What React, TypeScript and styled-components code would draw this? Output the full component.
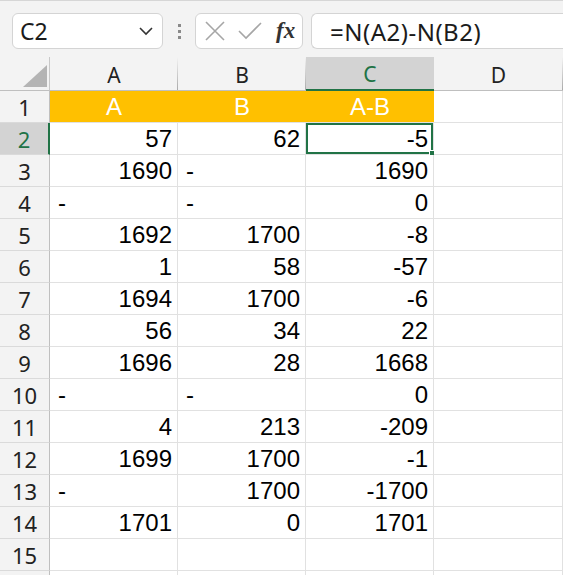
import { createGlobalStyle, styled } from 'styled-components';

const GREEN = '#217346';

const rows: string[][] = [
  ['57', '62', '-5'],
  ['1690', '-', '1690'],
  ['-', '-', '0'],
  ['1692', '1700', '-8'],
  ['1', '58', '-57'],
  ['1694', '1700', '-6'],
  ['56', '34', '22'],
  ['1696', '28', '1668'],
  ['-', '-', '0'],
  ['4', '213', '-209'],
  ['1699', '1700', '-1'],
  ['-', '1700', '-1700'],
  ['1701', '0', '1701'],
  ['', '', ''],
];

const Global = createGlobalStyle`
  body {
    margin: 0;
    background: #ffffff;
    font-family: "Noto Sans", "Open Sans", sans-serif;
    overflow: hidden;
  }
`;

export default function App() {
  return (
    <>
      <Global />
      <S.Page>
        <S.Toolbar>
          <S.NameBox>
            <S.NameText>C2</S.NameText>
            <svg width="16" height="10" viewBox="0 0 16 10">
              <path d="M2 2 L8 8 L14 2" fill="none" stroke="#333" strokeWidth="1.6" />
            </svg>
          </S.NameBox>
          <S.Grip>
            <span />
            <span />
            <span />
          </S.Grip>
          <S.FormulaButtons>
            <svg width="22" height="22" viewBox="0 0 22 22">
              <path d="M2 2 L20 20 M20 2 L2 20" stroke="#a6a6a6" strokeWidth="1.6" fill="none" />
            </svg>
            <svg width="24" height="20" viewBox="0 0 24 20">
              <path d="M1 10 L8 17 L23 2" stroke="#a6a6a6" strokeWidth="1.6" fill="none" />
            </svg>
            <S.Fx>fx</S.Fx>
          </S.FormulaButtons>
          <S.FormulaInput>=N(A2)-N(B2)</S.FormulaInput>
        </S.Toolbar>
        <S.Sheet>
          <S.Corner>
            <svg width="24" height="22" viewBox="0 0 24 22">
              <polygon points="24,0 24,22 0,22" fill="#b4b4b4" />
            </svg>
          </S.Corner>
          {['A', 'B', 'C', 'D'].map((c) => (
            <S.ColHeader key={c} $active={c === 'C'}>
              {c}
            </S.ColHeader>
          ))}

          <S.RowHeader>1</S.RowHeader>
          <S.TitleCell>A</S.TitleCell>
          <S.TitleCell>B</S.TitleCell>
          <S.TitleCell>A-B</S.TitleCell>
          <S.Cell />

          {rows.map((r, i) => (
            <S.Row key={i}>
              <S.RowHeader $active={i === 0}>{i + 2}</S.RowHeader>
              {r.map((v, j) => (
                <S.Cell key={j} $dash={v === '-'} $selected={i === 0 && j === 2}>
                  {v}
                </S.Cell>
              ))}
              <S.Cell />
            </S.Row>
          ))}
          {/* partly visible row below 15 */}
          <S.RowHeader />
          <S.Cell />
          <S.Cell />
          <S.Cell />
          <S.Cell />
        </S.Sheet>
      </S.Page>
    </>
  );
}

const S = {
  Page: styled.div`
    width: 563px;
    height: 575px;
    overflow: hidden;
    background: #ffffff;
  `,
  Toolbar: styled.div`
    height: 57px;
    box-sizing: border-box;
    border-top: 1px solid #d6d6d6;
    background: #f3f3f3;
    display: flex;
    align-items: flex-start;
    padding: 12px 0 0 12px;
  `,
  NameBox: styled.div`
    width: 151px;
    height: 36px;
    box-sizing: border-box;
    background: #ffffff;
    border: 1px solid #d4d4d4;
    border-radius: 6px;
    display: flex;
    align-items: center;
    justify-content: space-between;
    padding: 0 8px 0 7px;
  `,
  NameText: styled.span`
    font-size: 23px;
    color: #1b1b1b;
  `,
  Grip: styled.div`
    width: 32px;
    height: 36px;
    display: flex;
    flex-direction: column;
    align-items: center;
    justify-content: center;
    gap: 3px;
    & span {
      width: 3px;
      height: 3px;
      background: #8a8a8a;
    }
  `,
  FormulaButtons: styled.div`
    width: 108px;
    height: 36px;
    box-sizing: border-box;
    background: #ffffff;
    border: 1px solid #d4d4d4;
    border-radius: 6px;
    display: flex;
    align-items: center;
    gap: 12px;
    padding: 0 0 0 8px;
  `,
  Fx: styled.span`
    font-family: "Liberation Serif", "DejaVu Serif", serif;
    font-style: italic;
    font-weight: 700;
    font-size: 23px;
    color: #333333;
    margin-left: 2px;
  `,
  FormulaInput: styled.div`
    flex: 1;
    height: 36px;
    margin-left: 8px;
    box-sizing: border-box;
    background: #ffffff;
    border: 1px solid #d4d4d4;
    border-right: none;
    border-radius: 6px 0 0 6px;
    display: flex;
    align-items: center;
    padding-left: 18px;
    font-size: 24px;
    letter-spacing: 0.5px;
    color: #1b1b1b;
  `,
  Sheet: styled.div`
    display: grid;
    grid-template-columns: 50px 128px 128px 128px 129px;
    grid-template-rows: 34px;
    grid-auto-rows: 32px;
  `,
  Row: styled.div`
    display: contents;
  `,
  Corner: styled.div`
    background: #f3f3f3;
    border-right: 1px solid #c8c8c8;
    border-bottom: 1px solid #bfbfbf;
    display: flex;
    align-items: flex-end;
    justify-content: flex-end;
    padding: 0 2px 3px 0;
  `,
  ColHeader: styled.div<{ $active?: boolean }>`
    background: ${(p) =>
      p.$active
        ? '#d3d3d3'
        : 'linear-gradient(to bottom, rgba(170,170,170,0), #aaaaaa) right top / 1px 100% no-repeat, #f3f3f3'};
    border-bottom: ${(p) => (p.$active ? `2px solid ${GREEN}` : '1px solid #bfbfbf')};
    color: ${(p) => (p.$active ? GREEN : '#222222')};
    font-size: 21px;
    display: flex;
    align-items: center;
    justify-content: center;
    padding-top: 2px;
  `,
  RowHeader: styled.div<{ $active?: boolean }>`
    background: ${(p) => (p.$active ? '#d3d3d3' : '#f3f3f3')};
    border-right: ${(p) => (p.$active ? `2px solid ${GREEN}` : '1px solid #bfbfbf')};
    border-bottom: 1px solid #dadada;
    color: ${(p) => (p.$active ? GREEN : '#222222')};
    font-size: 22px;
    display: flex;
    align-items: center;
    justify-content: center;
  `,
  TitleCell: styled.div`
    background: #ffc000;
    border-bottom: 1px solid #e1e1e1;
    color: #ffffff;
    font-family: "Liberation Sans", Arial, sans-serif;
    font-size: 24px;
    display: flex;
    align-items: center;
    justify-content: center;
  `,
  Cell: styled.div<{ $dash?: boolean; $selected?: boolean }>`
    position: relative;
    background: #ffffff;
    border-right: 1px solid #e1e1e1;
    border-bottom: 1px solid #e1e1e1;
    font-family: "Liberation Sans", Arial, sans-serif;
    font-size: 24px;
    color: #000000;
    display: flex;
    align-items: center;
    justify-content: ${(p) => (p.$dash ? 'flex-start' : 'flex-end')};
    padding: 0 5px 0 8px;
    box-shadow: ${(p) => (p.$selected ? `inset 0 0 0 2px ${GREEN}` : 'none')};
    &::after {
      content: '';
      display: ${(p) => (p.$selected ? 'block' : 'none')};
      position: absolute;
      right: -4px;
      bottom: -4px;
      width: 6px;
      height: 6px;
      background: ${GREEN};
      border: 1px solid #ffffff;
    }
  `,
};
